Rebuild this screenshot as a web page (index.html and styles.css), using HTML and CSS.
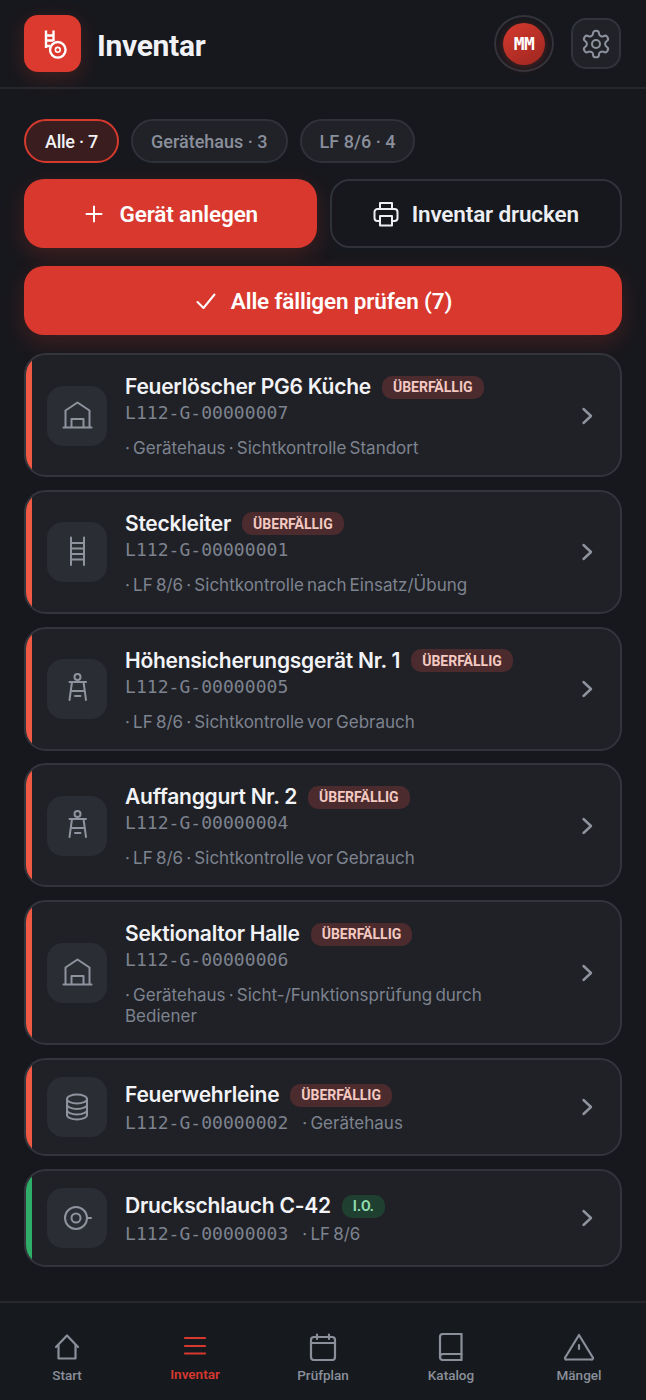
FILE: index.html
```html
<!DOCTYPE html>
<html lang="de">
<head>
    <meta charset="UTF-8">
    <meta name="viewport" content="width=device-width, initial-scale=1.0">
    <title>Inventar</title>
    <link rel="stylesheet" href="styles.css">
</head>
<body>
    <!-- shared icons -->
    <svg class="sprite" aria-hidden="true">
        <symbol id="i-garage" viewBox="0 0 32 32">
            <path d="M4.500 27V10.500L16.500 2.500L28.500 10.500V27"/><path d="M2.500 27.500H30.500"/><path d="M10.500 27V19H22.500V27"/>
        </symbol>
        <symbol id="i-ladder" viewBox="0 0 32 32">
            <path d="M10 1.500V29M23 1.500V29"/><path d="M10 7H23M10 12.500H23M10 18H23M10 23.500H23"/>
        </symbol>
        <symbol id="i-harness" viewBox="0 0 32 32">
            <circle cx="16.500" cy="4" r="3"/><path d="M8.500 9H25"/><path d="M11 9L8.500 27M22.500 9L25 27"/><path d="M10.500 18H23"/><path d="M14 23H19.500"/>
        </symbol>
        <symbol id="i-rope" viewBox="0 0 32 32">
            <ellipse cx="16" cy="8" rx="10" ry="4.500"/><path d="M6 8V24C6 26.500 10.500 28.500 16 28.500S26 26.500 26 24V8"/><path d="M6 13.500C6 16 10.500 18 16 18S26 16 26 13.500"/><path d="M6 19C6 21.500 10.500 23.500 16 23.500S26 21.500 26 19"/>
        </symbol>
        <symbol id="i-hose" viewBox="0 0 32 32">
            <circle cx="15" cy="16" r="11"/><circle cx="15" cy="16" r="4.500"/><path d="M26 16H30"/>
        </symbol>
        <symbol id="i-chevron" viewBox="0 0 24 24">
            <path d="M8.500 5L16 12L8.500 19"/>
        </symbol>
    </svg>

    <div class="page">
        <header class="topbar">
            <div class="logo">
                <svg viewBox="0 0 28 30" width="28" height="30">
                    <path d="M7 1.500V19M14.500 1.500V12M7 6.500H14.500M7 11.500H14.500M7 17H11"/>
                    <circle cx="18.800" cy="20.800" r="7.800"/>
                    <circle cx="18.800" cy="20.800" r="2.400" class="inner"/>
                </svg>
            </div>
            <h1>Inventar</h1>
            <div class="avatar"><span>MM</span></div>
            <button class="settings">
                <svg viewBox="0 0 24 24" width="32" height="32">
                    <circle cx="12" cy="12" r="3"/>
                    <path d="M12.22 2h-.44a2 2 0 0 0-2 2v.18a2 2 0 0 1-1 1.73l-.43.25a2 2 0 0 1-2 0l-.15-.08a2 2 0 0 0-2.73.73l-.22.38a2 2 0 0 0 .73 2.73l.15.1a2 2 0 0 1 1 1.72v.51a2 2 0 0 1-1 1.74l-.15.09a2 2 0 0 0-.73 2.73l.22.38a2 2 0 0 0 2.73.73l.15-.08a2 2 0 0 1 2 0l.43.25a2 2 0 0 1 1 1.73V20a2 2 0 0 0 2 2h.44a2 2 0 0 0 2-2v-.18a2 2 0 0 1 1-1.73l.43-.25a2 2 0 0 1 2 0l.15.08a2 2 0 0 0 2.73-.73l.22-.39a2 2 0 0 0-.73-2.73l-.15-.08a2 2 0 0 1-1-1.74v-.5a2 2 0 0 1 1-1.74l.15-.09a2 2 0 0 0 .73-2.73l-.22-.38a2 2 0 0 0-2.73-.73l-.15.08a2 2 0 0 1-2 0l-.43-.25a2 2 0 0 1-1-1.73V4a2 2 0 0 0-2-2z"/>
                </svg>
            </button>
        </header>

        <main class="content">
            <div class="chips">
                <span class="chip active">Alle · 7</span>
                <span class="chip">Gerätehaus · 3</span>
                <span class="chip">LF 8/6 · 4</span>
            </div>

            <div class="actions">
                <button class="btn primary">
                    <svg viewBox="0 0 24 24" width="24" height="24"><path d="M12 4.500V19.500M4.500 12H19.500"/></svg>
                    Gerät anlegen
                </button>
                <button class="btn outline">
                    <svg viewBox="0 0 26 26" width="26" height="26">
                        <path d="M7 8V2H19V8"/>
                        <path d="M7 20H4.500A3 3 0 0 1 1.500 17V11A3 3 0 0 1 4.500 8H21.500A3 3 0 0 1 24.500 11V17A3 3 0 0 1 21.500 20H19"/>
                        <path d="M7 15H19V24.500H7Z"/>
                    </svg>
                    Inventar drucken
                </button>
                <button class="btn primary wide">
                    <svg viewBox="0 0 24 24" width="24" height="24"><path d="M3.500 13L9.500 19L20.500 5.500"/></svg>
                    Alle fälligen prüfen (7)
                </button>
            </div>

            <ul class="list">
                <li class="card due">
                    <div class="thumb"><svg class="ico"><use href="#i-garage"/></svg></div>
                    <div class="info">
                        <div class="head"><span class="name">Feuerlöscher PG6 Küche</span><span class="badge">ÜBERFÄLLIG</span></div>
                        <div class="code">L112-G-00000007</div>
                        <div class="meta">· Gerätehaus · Sichtkontrolle Standort</div>
                    </div>
                    <svg class="chev"><use href="#i-chevron"/></svg>
                </li>
                <li class="card due">
                    <div class="thumb"><svg class="ico"><use href="#i-ladder"/></svg></div>
                    <div class="info">
                        <div class="head"><span class="name">Steckleiter</span><span class="badge">ÜBERFÄLLIG</span></div>
                        <div class="code">L112-G-00000001</div>
                        <div class="meta">· LF 8/6 · Sichtkontrolle nach Einsatz/Übung</div>
                    </div>
                    <svg class="chev"><use href="#i-chevron"/></svg>
                </li>
                <li class="card due">
                    <div class="thumb"><svg class="ico"><use href="#i-harness"/></svg></div>
                    <div class="info">
                        <div class="head"><span class="name">Höhensicherungsgerät Nr. 1</span><span class="badge">ÜBERFÄLLIG</span></div>
                        <div class="code">L112-G-00000005</div>
                        <div class="meta">· LF 8/6 · Sichtkontrolle vor Gebrauch</div>
                    </div>
                    <svg class="chev"><use href="#i-chevron"/></svg>
                </li>
                <li class="card due">
                    <div class="thumb"><svg class="ico"><use href="#i-harness"/></svg></div>
                    <div class="info">
                        <div class="head"><span class="name">Auffanggurt Nr. 2</span><span class="badge">ÜBERFÄLLIG</span></div>
                        <div class="code">L112-G-00000004</div>
                        <div class="meta">· LF 8/6 · Sichtkontrolle vor Gebrauch</div>
                    </div>
                    <svg class="chev"><use href="#i-chevron"/></svg>
                </li>
                <li class="card due">
                    <div class="thumb"><svg class="ico"><use href="#i-garage"/></svg></div>
                    <div class="info">
                        <div class="head"><span class="name">Sektionaltor Halle</span><span class="badge">ÜBERFÄLLIG</span></div>
                        <div class="code">L112-G-00000006</div>
                        <div class="meta">· Gerätehaus · Sicht-/Funktionsprüfung durch Bediener</div>
                    </div>
                    <svg class="chev"><use href="#i-chevron"/></svg>
                </li>
                <li class="card due compact">
                    <div class="thumb"><svg class="ico"><use href="#i-rope"/></svg></div>
                    <div class="info">
                        <div class="head"><span class="name">Feuerwehrleine</span><span class="badge">ÜBERFÄLLIG</span></div>
                        <div class="code-row"><span class="code">L112-G-00000002</span><span class="meta">· Gerätehaus</span></div>
                    </div>
                    <svg class="chev"><use href="#i-chevron"/></svg>
                </li>
                <li class="card ok compact">
                    <div class="thumb"><svg class="ico"><use href="#i-hose"/></svg></div>
                    <div class="info">
                        <div class="head"><span class="name">Druckschlauch C-42</span><span class="badge good">I.O.</span></div>
                        <div class="code-row"><span class="code">L112-G-00000003</span><span class="meta">· LF 8/6</span></div>
                    </div>
                    <svg class="chev"><use href="#i-chevron"/></svg>
                </li>
            </ul>
        </main>

        <nav class="tabbar">
            <a class="tab">
                <svg viewBox="0 0 28 28" width="28" height="28"><path d="M3 14L14 2.500L25 14"/><path d="M5.500 12V25.500H22.500V12"/></svg>
                Start
            </a>
            <a class="tab current">
                <svg viewBox="0 0 28 28" width="28" height="28"><path d="M4 5H24M4 13H24M4 20.500H24"/></svg>
                Inventar
            </a>
            <a class="tab">
                <svg viewBox="0 0 28 28" width="28" height="28"><rect x="2" y="4" width="24" height="23" rx="3"/><path d="M2 10H26M8 1.500V6M20 1.500V6"/></svg>
                Prüfplan
            </a>
            <a class="tab">
                <svg viewBox="0 0 28 28" width="28" height="28"><path d="M24.500 1H6A3 3 0 0 0 3 4V24A3 3 0 0 0 6 27H24.500Z"/><path d="M3 24A3 3 0 0 1 6 21H24.500"/></svg>
                Katalog
            </a>
            <a class="tab">
                <svg viewBox="0 0 32 28" width="32" height="28"><path d="M16 2L2.500 24A1.500 1.500 0 0 0 4 26.500H28A1.500 1.500 0 0 0 29.500 24Z"/><path d="M16 12V16"/></svg>
                Mängel
            </a>
        </nav>
    </div>
</body>
</html>
```

FILE: styles.css
```css
* {
    box-sizing: border-box;
}

body {
    margin: 0;
    background: #17181d;
    color: #f1f2f5;
    font-family: Inter, Roboto, sans-serif;
}

svg {
    fill: none;
    stroke: currentColor;
    stroke-width: 2;
    stroke-linecap: round;
    stroke-linejoin: round;
}

.sprite {
    display: none;
}

.page {
    width: 646px;
    height: 1400px;
    display: flex;
    flex-direction: column;
}

/* header */
.topbar {
    height: 89px;
    padding: 15px 25px 0 24px;
    display: flex;
    align-items: flex-start;
    border-bottom: 2px solid #26282e;
}

.logo {
    width: 57px;
    height: 57px;
    border-radius: 14px;
    background: #dc392f;
    box-shadow: 0 6px 20px rgba(220, 57, 47, 0.22);
    color: #fff;
    display: flex;
    align-items: center;
    justify-content: center;
    flex-shrink: 0;
}

.logo svg {
    stroke-width: 2.400;
    stroke-linecap: butt;
}

.logo .inner {
    stroke-width: 1.600;
}

h1 {
    margin: 12px 0 0 16px;
    font-family: Roboto, sans-serif;
    font-size: 30px;
    line-height: 38px;
    font-weight: 700;
    letter-spacing: -0.3px;
    flex: 1;
}

.avatar {
    width: 60px;
    height: 57px;
    border-radius: 50%;
    border: 2px solid #32343c;
    display: flex;
    align-items: center;
    justify-content: center;
    margin-right: 17px;
}

.avatar span {
    width: 42px;
    height: 42px;
    border-radius: 50%;
    background: linear-gradient(145deg, #d63a2e, #9c2620);
    box-shadow: 0 2px 10px rgba(214, 58, 46, 0.3);
    font-family: "DejaVu Sans Mono", monospace;
    font-size: 18px;
    font-weight: 700;
    letter-spacing: -0.6px;
    color: #fff;
    display: flex;
    align-items: center;
    justify-content: center;
}

.settings {
    width: 50px;
    height: 51px;
    margin-top: 3px;
    padding: 0;
    border-radius: 15px;
    border: 2px solid #32343c;
    background: #202228;
    color: #8d929d;
    display: flex;
    align-items: center;
    justify-content: center;
}

.settings svg {
    stroke-width: 1.500;
}

/* main column */
.content {
    flex: 1;
    padding: 30px 24px 0;
}

.chips {
    display: flex;
    gap: 12px;
}

.chip {
    height: 44px;
    padding: 0 18px;
    border-radius: 22px;
    border: 2px solid #30323a;
    background: #202228;
    color: #8a8f9b;
    font-family: Roboto, sans-serif;
    font-size: 18px;
    font-weight: 500;
    display: flex;
    align-items: center;
}

.chip.active {
    padding: 0 19px;
    letter-spacing: -0.25px;
    border-color: #d63a2e;
    background: #3a1d1e;
    color: #f1f2f5;
}

.actions {
    margin-top: 16px;
    display: grid;
    grid-template-columns: 1fr 1fr;
    column-gap: 13px;
    row-gap: 18px;
}

.btn {
    height: 69px;
    padding: 1px 0 0;
    border-radius: 20px;
    border: 2px solid transparent;
    font-family: Roboto, sans-serif;
    font-size: 22.500px;
    font-weight: 600;
    letter-spacing: -0.15px;
    display: flex;
    align-items: center;
    justify-content: center;
    gap: 13px;
}

.btn svg {
    margin-top: -1px;
}

.btn.primary {
    background: #d8382e;
    color: #fff;
    box-shadow: 0 8px 22px rgba(216, 56, 46, 0.22);
}

.btn.outline {
    background: transparent;
    border-color: #30323a;
    color: #eceef2;
}

.btn.wide {
    grid-column: 1 / 3;
}

/* cards */
.list {
    list-style: none;
    margin: 18px 0 0;
    padding: 0;
    display: flex;
    flex-direction: column;
    gap: 12.750px;
}

.card {
    border-radius: 22px;
    border: 2px solid #33353d;
    background: #202126;
    overflow: hidden;
    padding: 17px 21px 16px;
    display: flex;
    align-items: center;
    position: relative;
}

.card::before {
    content: "";
    position: absolute;
    left: 0;
    top: 0;
    bottom: 0;
    width: 6px;
}

.card.due::before {
    background: #f05a45;
}

.card.ok::before {
    background: #2fae69;
}

.card.compact {
    height: 98px;
    padding-top: 0;
    padding-bottom: 0;
}

.thumb {
    width: 60px;
    height: 60px;
    border-radius: 16px;
    background: #2b2d35;
    color: #8e939e;
    display: flex;
    align-items: center;
    justify-content: center;
    flex-shrink: 0;
}

.ico {
    width: 32px;
    height: 32px;
}

.info {
    flex: 1;
    min-width: 0;
    margin: 0 44px 0 18px;
    padding-top: 2px;
}

.compact .info {
    padding-top: 4px;
}

.head {
    display: flex;
    align-items: center;
    gap: 11px;
    white-space: nowrap;
}

.name {
    font-size: 21px;
    line-height: 26px;
    font-weight: 600;
    letter-spacing: -0.25px;
    color: #f2f3f6;
}

.badge {
    height: 23px;
    padding: 0 11px;
    border-radius: 10px;
    background: #4b2b2d;
    color: #f3c9c2;
    font-family: Roboto, sans-serif;
    font-size: 14px;
    font-weight: 700;
    display: flex;
    align-items: center;
}

.badge.good {
    background: #1f3f30;
    color: #8fdcae;
}

.code {
    margin-top: 1px;
    font-family: "DejaVu Sans Mono", monospace;
    font-size: 18px;
    line-height: 24px;
    letter-spacing: 0.05px;
    color: #7d838f;
}

.meta {
    margin-top: 13px;
    font-size: 17px;
    line-height: 21px;
    word-spacing: -1.600px;
    color: #7d838f;
}

.code-row {
    margin-top: 3px;
    display: flex;
    align-items: center;
    gap: 14px;
}

.code-row .code,
.code-row .meta {
    margin-top: 0;
}

.chev {
    width: 24px;
    height: 24px;
    color: #8e939e;
    stroke-width: 2.400;
    flex-shrink: 0;
}

/* bottom tabs */
.tabbar {
    height: 99px;
    padding: 30px 3px 0;
    background: #161a1e;
    border-top: 2px solid #26282e;
    display: grid;
    grid-template-columns: repeat(5, 1fr);
}

.tab {
    display: flex;
    flex-direction: column;
    align-items: center;
    gap: 6px;
    color: #8a8f9a;
    font-family: Roboto, sans-serif;
    font-size: 13.500px;
    font-weight: 500;
}

.tab svg {
    stroke-width: 2.200;
}

.tab.current {
    gap: 5px;
    color: #d8382e;
    font-weight: 600;
}
```
